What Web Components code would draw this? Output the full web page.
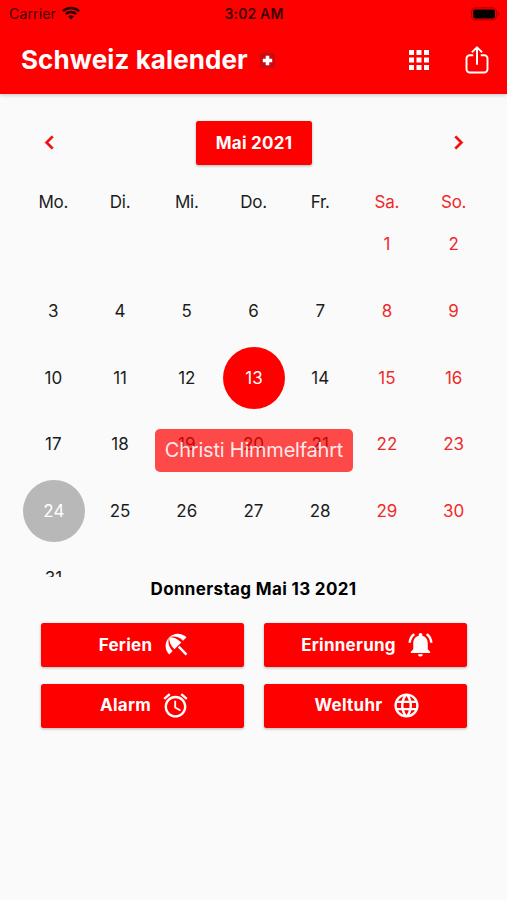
<!DOCTYPE html>
<html lang="de">
<head>
<meta charset="utf-8">
<title>Schweiz kalender</title>
<style>
  body {
    margin: 0;
    height: 900px;
    overflow: hidden;
    background: #fafafa;
    color: #1c1c1c;
    font-family: Inter, Roboto, sans-serif;
    --rot: #ff0000;
  }
</style>
</head>
<body>
<app-kalender></app-kalender>

<script>
const iconos = {
  apps: '<path d="M4 8h4V4H4v4zm6 12h4v-4h-4v4zm-6 0h4v-4H4v4zm0-6h4v-4H4v4zm6 0h4v-4h-4v4zm6-10v4h4V4h-4zm-6 4h4V4h-4v4zm6 6h4v-4h-4v4zm0 6h4v-4h-4v4z"/>',
  share: '<g fill="none" stroke="currentColor" stroke-width="1.55"><path d="M9 8.2H6.2a2.6 2.6 0 0 0-2.6 2.6v8.6A2.6 2.6 0 0 0 6.2 22h11.6a2.6 2.6 0 0 0 2.6-2.6v-8.6a2.6 2.6 0 0 0-2.6-2.6H15"/><path d="M12 15.8V2M7.9 5.9L12 1.8l4.1 4.1"/></g>',
  left: '<path stroke="currentColor" stroke-width=".5" d="M15.41 7.41L14 6l-6 6 6 6 1.41-1.41L10.83 12z"/>',
  right: '<path stroke="currentColor" stroke-width=".5" d="M10 6L8.59 7.41 13.17 12l-4.58 4.59L10 18l6-6z"/>',
  beach: '<path d="M13.127 14.56l1.43-1.43 6.44 6.443L19.57 21zm4.293-5.73l2.86-2.86c-3.95-3.95-10.35-3.96-14.3-.02 3.93-1.3 8.31-.25 11.44 2.88zM5.95 5.98c-3.94 3.95-3.93 10.35.02 14.3l2.86-2.86C5.7 14.29 4.65 9.91 5.95 5.98zm.02-.02l-.01.01c-.38 3.01 1.17 6.88 4.3 10.02l5.73-5.73c-3.13-3.13-7.01-4.68-10.02-4.3z"/>',
  bell: '<path d="M7.58 4.08L6.15 2.65C3.75 4.48 2.17 7.3 2.03 10.5h2c.15-2.65 1.51-4.97 3.55-6.42zm12.39 6.42h2c-.15-3.2-1.73-6.02-4.12-7.85l-1.42 1.43c2.02 1.45 3.39 3.77 3.54 6.42zM18 11c0-3.07-1.64-5.64-4.5-6.32V4c0-.83-.67-1.5-1.5-1.5s-1.5.67-1.5 1.5v.68C7.63 5.36 6 7.92 6 11v5l-2 2v1h16v-1l-2-2v-5zm-6 11c.14 0 .27-.01.4-.04.65-.14 1.18-.58 1.44-1.18.1-.24.15-.5.15-.78h-4c.01 1.1.9 2 2.01 2z"/>',
  alarm: '<path d="M22 5.72l-4.6-3.86-1.29 1.53 4.6 3.86L22 5.72zM7.88 3.39L6.6 1.86 2 5.71l1.29 1.53 4.59-3.85zM12.5 8H11v6l4.75 2.85.75-1.23-4-2.37V8zM12 4c-4.97 0-9 4.03-9 9s4.02 9 9 9c4.97 0 9-4.03 9-9s-4.03-9-9-9zm0 16c-3.87 0-7-3.13-7-7s3.13-7 7-7 7 3.13 7 7-3.13 7-7 7z"/>',
  globe: '<path d="M11.99 2C6.47 2 2 6.48 2 12s4.47 10 9.99 10C17.52 22 22 17.52 22 12S17.52 2 11.99 2zm6.93 6h-2.95c-.32-1.25-.78-2.45-1.38-3.56 1.84.63 3.37 1.91 4.33 3.56zM12 4.04c.83 1.2 1.48 2.53 1.91 3.96h-3.82c.43-1.43 1.08-2.76 1.91-3.96zM4.26 14C4.1 13.36 4 12.69 4 12s.1-1.36.26-2h3.38c-.08.66-.14 1.32-.14 2 0 .68.06 1.34.14 2H4.26zm.82 2h2.95c.32 1.25.78 2.45 1.38 3.56-1.84-.63-3.37-1.9-4.33-3.56zm2.95-8H5.08c.96-1.66 2.49-2.93 4.33-3.56C8.81 5.55 8.35 6.75 8.03 8zM12 19.96c-.83-1.2-1.48-2.53-1.91-3.96h3.82c-.43 1.43-1.08 2.76-1.91 3.96zM14.34 14H9.66c-.09-.66-.16-1.32-.16-2 0-.68.07-1.35.16-2h4.68c.09.65.16 1.32.16 2 0 .68-.07 1.34-.16 2zm.25 5.56c.6-1.11 1.06-2.31 1.38-3.56h2.95c-.96 1.65-2.49 2.93-4.33 3.56zM16.36 14c.08-.66.14-1.32.14-2 0-.68-.06-1.34-.14-2h3.38c.16.64.26 1.31.26 2s-.1 1.36-.26 2h-3.38z"/>'
};

class AppIcon extends HTMLElement {
  constructor() {
    super();
    this.shadow = this.attachShadow({ mode: 'open' });
  }

  connectedCallback() {
    const size = this.getAttribute('size') || 30;
    this.shadow.innerHTML = `
      <style>
        :host { display: block; flex: none; width: ${size}px; height: ${size}px; }
        svg { display: block; overflow: visible; }
      </style>
      <svg width="${size}" height="${size}" viewBox="0 0 24 24" fill="currentColor">${iconos[this.getAttribute('name')]}</svg>
    `;
  }
}

class StatusBar extends HTMLElement {
  constructor() {
    super();
    this.shadow = this.attachShadow({ mode: 'open' });
  }

  connectedCallback() {
    this.shadow.innerHTML = `
      <style>
        :host {
          display: grid; grid-template-columns: 1fr auto 1fr; align-items: center;
          box-sizing: border-box; height: 27px; padding: 0 7px 0 9px;
          color: #3c0000; font-size: 14px; line-height: 27px;
        }
        .left { display: flex; align-items: center; gap: 6px; letter-spacing: .15px; }
        .left svg { margin-bottom: 2px; }
        .time { font-weight: 600; letter-spacing: .15px; margin-right: 1px; }
        .battery { justify-self: end; display: block; }
      </style>
      <div class="left">
        <span>Carrier</span>
        <svg width="18" height="14" viewBox="0 0 18 14" fill="none" stroke="#250000" stroke-width="2.5">
          <path d="M.9 5.2a11.6 11.6 0 0 1 16.2 0"/>
          <path d="M3.8 8.2a7.4 7.4 0 0 1 10.4 0"/>
          <path d="M9 13.6l-2.8-3a4 4 0 0 1 5.6 0z" fill="#250000" stroke="none"/>
        </svg>
      </div>
      <span class="time">3:02 AM</span>
      <svg class="battery" width="29" height="14" viewBox="0 0 29 14">
        <rect x=".7" y=".9" width="24.6" height="12" rx="3.2" fill="none" stroke="#a80000"/>
        <rect x="2.2" y="2.4" width="21.8" height="9" rx="1.8" fill="#000"/>
        <path d="M26.8 4.8c2.2.8 2.2 3.6 0 4.4z" fill="#a80000"/>
      </svg>
    `;
  }
}

class AppHeader extends HTMLElement {
  constructor() {
    super();
    this.shadow = this.attachShadow({ mode: 'open' });
  }

  connectedCallback() {
    this.shadow.innerHTML = `
      <style>
        :host {
          display: block; height: 94px; color: #fff; background: var(--rot);
          box-shadow: 0 1px 4px rgba(0, 0, 0, .22);
        }
        .bar { display: flex; align-items: center; height: 66px; padding: 0 15px 0 21px; }
        h1 { margin: 0; font-size: 26px; font-weight: 650; line-height: 32px; letter-spacing: .1px; white-space: nowrap; }
        .flag { margin-left: 12.5px; }
        .actions { display: flex; align-items: center; gap: 28px; margin-left: auto; }
      </style>
      <status-bar></status-bar>
      <div class="bar">
        <h1><slot></slot></h1>
        <svg class="flag" width="15" height="15" viewBox="0 0 15 15">
          <rect width="15" height="15" rx="2" fill="#c80c12"/>
          <path d="M5.7 2.8h3.600v2.900h2.900v3.600H9.300v2.900H5.700V9.300H2.800V5.700h2.900z" fill="#fff"/>
        </svg>
        <div class="actions">
          <app-icon name="apps" size="30"></app-icon>
          <app-icon name="share" size="30"></app-icon>
        </div>
      </div>
    `;
  }
}

class RedButton extends HTMLElement {
  constructor() {
    super();
    this.shadow = this.attachShadow({ mode: 'open' });
  }

  connectedCallback() {
    const icon = this.getAttribute('icon');
    this.shadow.innerHTML = `
      <style>
        :host {
          display: flex; align-items: center; justify-content: center; gap: 10px;
          box-sizing: border-box; height: 44px; border-radius: 2.5px; color: #fff; background: var(--rot);
          font-size: 17px; font-weight: 650; letter-spacing: .25px; white-space: nowrap;
          box-shadow: 0 1px 3px rgba(0, 0, 0, .28);
        }
        :host([icon]) { padding-left: 5.500px; }
        :host([icon]) span { margin-bottom: 1px; }
        app-icon { margin-bottom: 1px; }
      </style>
      <span><slot></slot></span>
      ${icon ? `<app-icon name="${icon}" size="29"></app-icon>` : ''}
    `;
  }
}

class MonthNav extends HTMLElement {
  constructor() {
    super();
    this.shadow = this.attachShadow({ mode: 'open' });
  }

  connectedCallback() {
    this.shadow.innerHTML = `
      <style>
        :host { display: flex; align-items: center; justify-content: space-between; padding: 0 35px 0 36px; color: #f00a0a; }
        red-button { width: 116px; }
        app-icon { margin-bottom: 1px; }
      </style>
      <app-icon name="left" size="27"></app-icon>
      <red-button><slot></slot></red-button>
      <app-icon name="right" size="27"></app-icon>
    `;
  }
}

class MonthGrid extends HTMLElement {
  constructor() {
    super();
    this.shadow = this.attachShadow({ mode: 'open' });
  }

  connectedCallback() {
    const dias = ['Mo.', 'Di.', 'Mi.', 'Do.', 'Fr.', 'Sa.', 'So.'];
    const total = 31;
    const offset = 5; // 1. Mai 2021 is a Saturday
    const selected = 13;
    const holiday = 24;

    let celdas = '';
    for (let d = 1; d <= total; d++) {
      const col = (d - 1 + offset) % 7;
      const clase = d === selected ? 'sel' : d === holiday ? 'hol' : col > 4 ? 'we' : '';
      celdas += `<div class="day" style="grid-column: ${col + 1}"><span class="${clase}">${d}</span></div>`;
    }

    this.shadow.innerHTML = `
      <style>
        :host { display: block; position: relative; padding: 0 20px; font-size: 17px; }
        .names, .days { display: grid; grid-template-columns: repeat(7, 1fr); text-align: center; }
        .names { height: 18px; line-height: 18px; letter-spacing: -.25px; }
        .days { grid-auto-rows: 66.7px; height: 366px; overflow: hidden; }
        .day { display: flex; align-items: center; justify-content: center; }
        .day span { width: 62px; height: 62px; line-height: 62px; border-radius: 50%; }
        .we { color: #ee2a2a; }
        .day .sel { color: #fff; background: var(--rot); }
        .day .hol { color: #fff; background: #b8b8b8; }
        .day .sel, .day .hol { margin-left: 1px; }
        /* floats over the row below the selected day */
        .tip {
          position: absolute; top: 236px; left: 155px; width: 198px; height: 42.5px; line-height: 43px;
          border-radius: 5px; text-align: center; white-space: nowrap;
          color: rgba(255, 255, 255, .9); background: rgba(255, 0, 0, .71); font-size: 20px; letter-spacing: -.22px;
        }
      </style>
      <div class="names">${dias.map((n, i) => `<span class="${i > 4 ? 'we' : ''}">${n}</span>`).join('')}</div>
      <div class="days">${celdas}</div>
      <div class="tip"><slot></slot></div>
    `;
  }
}

class AppKalender extends HTMLElement {
  constructor() {
    super();
    this.shadow = this.attachShadow({ mode: 'open' });
  }

  connectedCallback() {
    this.shadow.innerHTML = `
      <style>
        :host { display: block; }
        month-nav { margin-top: 26.5px; }
        month-grid { margin-top: 28.5px; }
        .date {
          margin-top: 1px; text-align: center; font-size: 17px; font-weight: 650;
          line-height: 22px; letter-spacing: .35px; color: #000;
        }
        .buttons { display: grid; grid-template-columns: 1fr 1fr; gap: 16.5px 20.5px; margin: 23px 40.5px 0 41px; }
      </style>
      <app-header>Schweiz kalender</app-header>
      <month-nav>Mai 2021</month-nav>
      <month-grid>Christi Himmelfahrt</month-grid>
      <div class="date">Donnerstag Mai 13 2021</div>
      <div class="buttons">
        <red-button icon="beach">Ferien</red-button>
        <red-button icon="bell">Erinnerung</red-button>
        <red-button icon="alarm">Alarm</red-button>
        <red-button icon="globe">Weltuhr</red-button>
      </div>
    `;
  }
}

customElements.define('app-icon', AppIcon);
customElements.define('status-bar', StatusBar);
customElements.define('app-header', AppHeader);
customElements.define('red-button', RedButton);
customElements.define('month-nav', MonthNav);
customElements.define('month-grid', MonthGrid);
customElements.define('app-kalender', AppKalender);
</script>
</body>
</html>
